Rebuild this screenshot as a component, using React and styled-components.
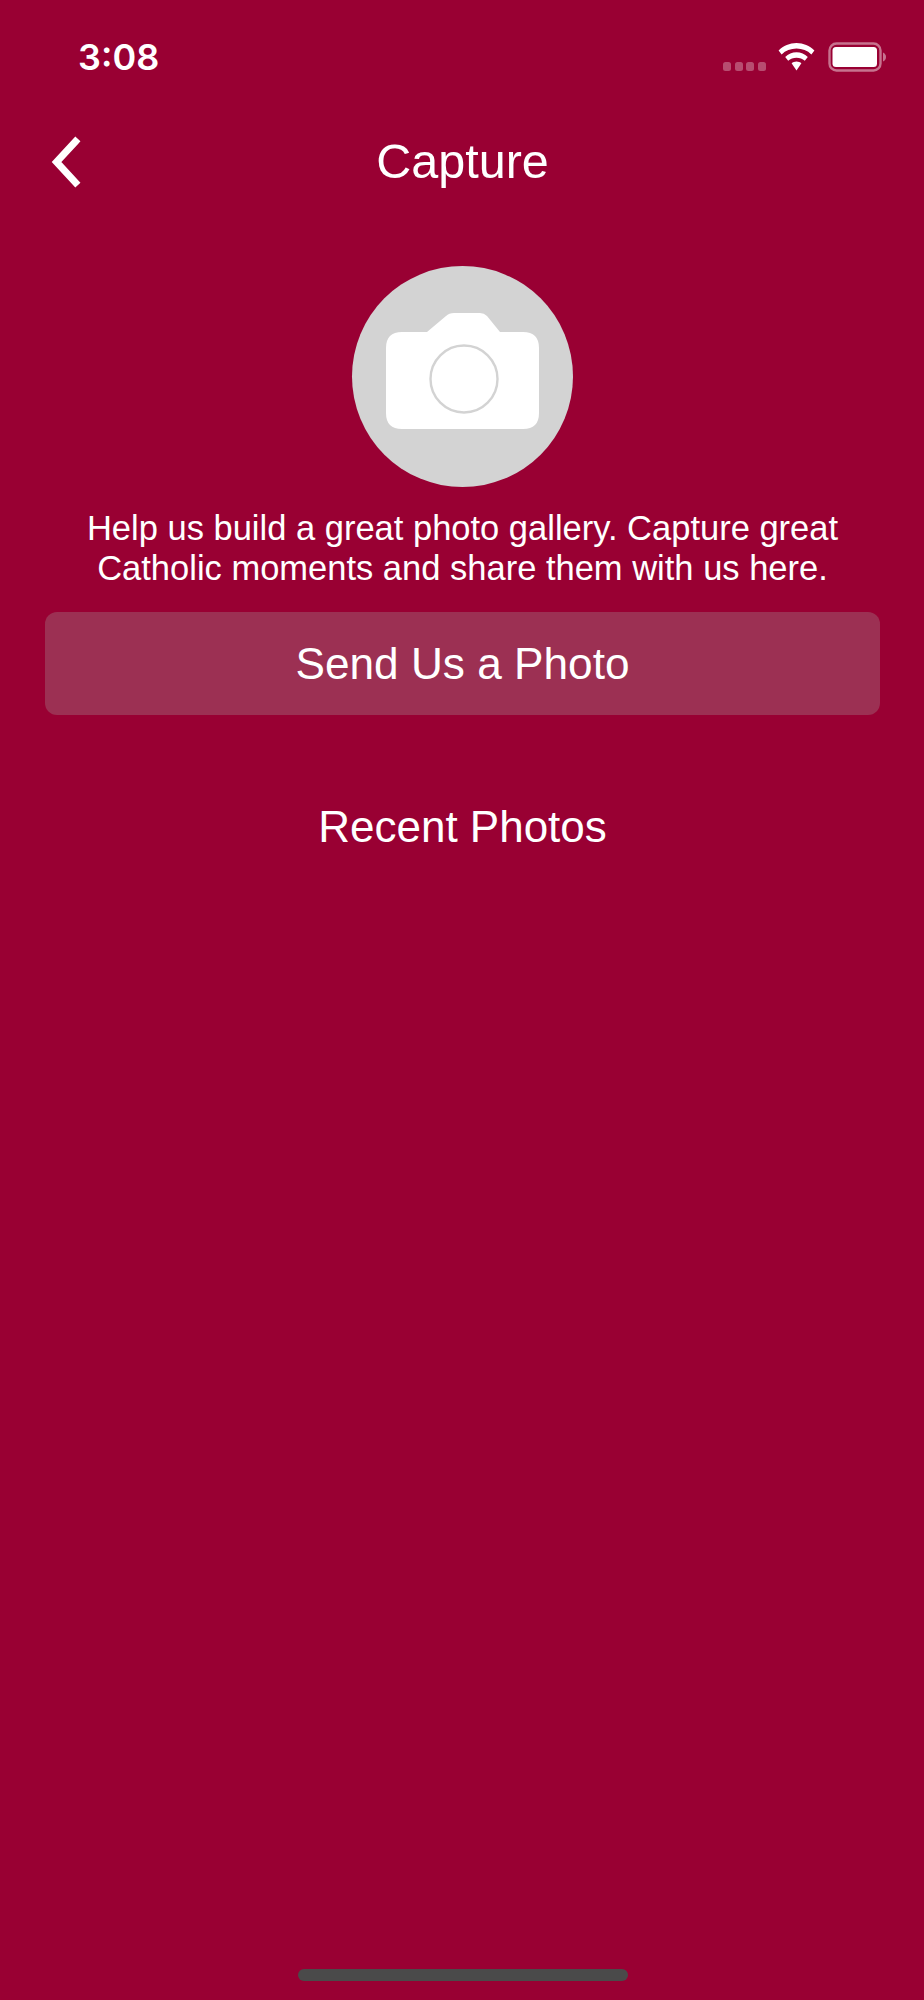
import React from 'react';
import styled, { createGlobalStyle } from 'styled-components';

const GlobalStyle = createGlobalStyle`
  html, body {
    margin: 0;
    padding: 0;
    background-color: #990033;
  }
`;

const Screen = styled.div`
  display: flex;
  flex-direction: column;
  height: 2000px;
  padding: 0 44px 0 45px;
  box-sizing: border-box;
  background-color: #990033;
  color: #ffffff;
  font-family: "Liberation Sans", Arial, sans-serif;
`;

const StatusBar = styled.div`
  display: flex;
  align-items: center;
  justify-content: space-between;
  height: 28px;
  margin-top: 43px;
  margin-right: -7px;
  padding-left: 33px;
`;

const Time = styled.span`
  font-family: Inter, "Liberation Sans", sans-serif;
  font-size: 36px;
  font-weight: 600;
  line-height: 28px;
`;

const StatusIcons = styled.div`
  display: flex;
  align-items: center;
  gap: 13px;
`;

const Dots = styled.div`
  display: flex;
  gap: 3.7px;
  align-self: flex-end;
  margin-right: -1px;
  margin-bottom: 1px;
`;

const Dot = styled.span`
  width: 8px;
  height: 9px;
  border-radius: 2.5px;
  background-color: rgba(255, 255, 255, 0.3);
`;

const NavBar = styled.div`
  position: relative;
  display: flex;
  align-items: center;
  justify-content: center;
  height: 56px;
  margin-top: 62px;
`;

const BackButton = styled.button`
  position: absolute;
  left: 5px;
  top: 1px;
  display: flex;
  padding: 0;
  border: none;
  background: none;
  cursor: pointer;
`;

const Title = styled.h1`
  margin: 0;
  font-size: 48.5px;
  font-weight: 400;
  line-height: 56px;
`;

const Avatar = styled.div`
  display: flex;
  align-items: center;
  justify-content: center;
  align-self: center;
  width: 221px;
  height: 221px;
  margin-top: 77px;
  border-radius: 50%;
  background-color: #d3d3d3;
`;

const CameraSvg = styled.svg`
  margin-top: -12px;
`;

const Intro = styled.p`
  margin: 21px -20px 0;
  font-size: 34.5px;
  line-height: 40px;
  text-align: center;
`;

const SendButton = styled.button`
  height: 103px;
  margin-top: 24px;
  padding: 0;
  border: none;
  border-radius: 12px;
  background-color: #9c3053;
  color: #ffffff;
  font-family: inherit;
  font-size: 44.2px;
  cursor: pointer;
`;

const SectionTitle = styled.h2`
  margin: 87px 0 0;
  font-size: 44px;
  font-weight: 400;
  line-height: 50px;
  text-align: center;
`;

const HomeIndicator = styled.div`
  align-self: center;
  width: 330px;
  height: 12px;
  margin-top: auto;
  margin-bottom: 19px;
  border-radius: 6px;
  background-color: #4a4a4a;
`;

const WifiIcon = () => (
  <svg width="37" height="28" viewBox="0 0 37 28">
    <path
      d="M18.5 0C11.6 0 5.4 2.8 0.6 7.4L3.6 11.4C7.5 7.7 12.8 5.6 18.5 5.6S29.5 7.7 33.4 11.4L36.4 7.4C31.6 2.8 25.4 0 18.5 0Z"
      fill="#fff"
    />
    <path
      d="M18.5 9.3C14.2 9.3 10.2 11 7.2 13.9L10.2 17.8C12.4 15.7 15.3 14.7 18.5 14.7S24.6 15.7 26.8 17.8L29.8 13.9C26.8 11 22.8 9.3 18.5 9.3Z"
      fill="#fff"
    />
    <path d="M18.5 18.4C16.6 18.4 14.9 19.1 13.6 20.3L18.5 27.4L23.4 20.3C22.1 19.1 20.4 18.4 18.5 18.4Z" fill="#fff" />
  </svg>
);

const BatteryIcon = () => (
  <svg width="59" height="30" viewBox="0 0 59 30">
    <rect x="1.5" y="1.5" width="51" height="27" rx="7" fill="none" stroke="#fff" strokeOpacity="0.45" strokeWidth="2.4" />
    <rect x="4.5" y="5" width="44.5" height="20" rx="3.5" fill="#fff" />
    <path d="M55 10.5C57 11.5 58 13 58 15S57 18.5 55 19.5Z" fill="#fff" fillOpacity="0.45" />
  </svg>
);

const BackIcon = () => (
  <svg width="36" height="54" viewBox="0 0 36 54">
    <path d="M25.5 7.5L6.5 28L25.5 48.5" fill="none" stroke="#fff" strokeWidth="7" strokeLinecap="square" />
  </svg>
);

const CameraIcon = () => (
  <CameraSvg width="153" height="116" viewBox="0 0 153 116">
    <path
      d="M16 19H41L60 3Q63 0 68 0H94Q98 0 101 3L114 19H137Q153 19 153 35V100Q153 116 137 116H16Q0 116 0 100V35Q0 19 16 19Z"
      fill="#fff"
    />
    <circle cx="78" cy="66" r="33.5" fill="#fff" stroke="#d3d3d3" strokeWidth="2.4" />
  </CameraSvg>
);

const App = () => {
  return (
    <Screen>
      <GlobalStyle />
      <StatusBar>
        <Time>3:08</Time>
        <StatusIcons>
          <Dots>
            <Dot />
            <Dot />
            <Dot />
            <Dot />
          </Dots>
          <WifiIcon />
          <BatteryIcon />
        </StatusIcons>
      </StatusBar>
      <NavBar>
        <BackButton aria-label="Back">
          <BackIcon />
        </BackButton>
        <Title>Capture</Title>
      </NavBar>
      <Avatar>
        <CameraIcon />
      </Avatar>
      <Intro>
        Help us build a great photo gallery. Capture great
        <br />
        Catholic moments and share them with us here.
      </Intro>
      <SendButton>Send Us a Photo</SendButton>
      <SectionTitle>Recent Photos</SectionTitle>
      <HomeIndicator />
    </Screen>
  );
};

export default App;
